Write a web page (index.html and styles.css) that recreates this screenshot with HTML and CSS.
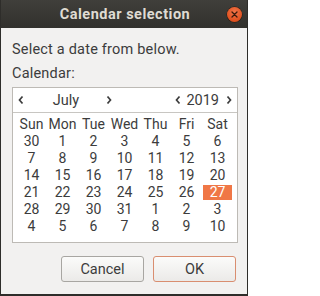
FILE: index.html
```html
<!DOCTYPE html>
<html>
<head>
<meta charset="utf-8">
<link rel="stylesheet" href="styles.css">
</head>
<body>
<div class="window">
  <div class="titlebar">
    <span class="title">Calendar selection</span>
    <span class="close"><svg width="15" height="15" viewBox="0 0 15 15"><path d="M5 5 L10 10 M10 5 L5 10" stroke="#3a1a0c" stroke-width="1.3" stroke-linecap="round"/></svg></span>
  </div>
  <div class="content">
    <div class="label">Select a date from below.</div>
    <div class="label">Calendar:</div>
    <div class="calendar">
      <div class="cal-header">
        <div class="nav month-nav">
          <svg class="chev" width="6" height="10" viewBox="0 0 6 10"><path d="M4.5 1.5 L1.5 5 L4.5 8.5" fill="none" stroke="#3c3c3c" stroke-width="1.7"/></svg>
          <span class="month">July</span>
          <svg class="chev" width="6" height="10" viewBox="0 0 6 10"><path d="M1.5 1.5 L4.5 5 L1.5 8.5" fill="none" stroke="#3c3c3c" stroke-width="1.7"/></svg>
        </div>
        <div class="nav year-nav">
          <svg class="chev" width="6" height="10" viewBox="0 0 6 10"><path d="M4.5 1.5 L1.5 5 L4.5 8.5" fill="none" stroke="#3c3c3c" stroke-width="1.7"/></svg>
          <span class="year">2019</span>
          <svg class="chev" width="6" height="10" viewBox="0 0 6 10"><path d="M1.5 1.5 L4.5 5 L1.5 8.5" fill="none" stroke="#3c3c3c" stroke-width="1.7"/></svg>
        </div>
      </div>
      <div class="grid">
        <span>Sun</span><span>Mon</span><span>Tue</span><span>Wed</span><span>Thu</span><span>Fri</span><span>Sat</span>
        <span>30</span><span>1</span><span>2</span><span>3</span><span>4</span><span>5</span><span>6</span>
        <span>7</span><span>8</span><span>9</span><span>10</span><span>11</span><span>12</span><span>13</span>
        <span>14</span><span>15</span><span>16</span><span>17</span><span>18</span><span>19</span><span>20</span>
        <span>21</span><span>22</span><span>23</span><span>24</span><span>25</span><span>26</span><span class="sel">27</span>
        <span>28</span><span>29</span><span>30</span><span>31</span><span>1</span><span>2</span><span>3</span>
        <span>4</span><span>5</span><span>6</span><span>7</span><span>8</span><span>9</span><span>10</span>
      </div>
    </div>
    <div class="buttons">
      <button class="btn">Cancel</button>
      <button class="btn ok">OK</button>
    </div>
  </div>
</div>
</body>
</html>
```
FILE: styles.css
```css
html, body {
  margin: 0;
  padding: 0;
}
body {
  width: 248px;
  height: 296px;
  overflow: hidden;
  font-family: Roboto, "Open Sans", sans-serif;
  color: #3c3c3c;
}
.window {
  box-sizing: border-box;
  width: 248px;
  height: 296px;
  background: #f2f1f0;
  border-left: 1px solid #2e2d2a;
  border-right: 1px solid #2e2d2a;
  border-bottom: 2px solid #2e2d2a;
  display: flex;
  flex-direction: column;
}
.titlebar {
  height: 28px;
  flex: none;
  background: linear-gradient(#403f3b, #32312d);
  display: grid;
  grid-template-columns: 1fr auto 1fr;
  align-items: center;
}
.title {
  grid-column: 2;
  color: #dfdbd2;
  font-weight: bold;
  font-size: 14.5px;
  letter-spacing: 0.5px;
  padding-left: 2px;
}
.close {
  grid-column: 3;
  justify-self: end;
  margin-right: 5px;
  width: 15px;
  height: 15px;
  border-radius: 50%;
  background: radial-gradient(circle at 50% 35%, #f2764a, #e0501e 70%, #c8461a);
  box-shadow: 0 0 0 0.5px #2a1a10;
  display: flex;
}
.content {
  flex: 1;
  padding: 10px 9px 0 11px;
  display: flex;
  flex-direction: column;
}
.label {
  font-size: 14.5px;
  line-height: 24px;
  letter-spacing: 0.2px;
}
.calendar {
  margin-top: 1px;
  background: #fff;
  border: 1px solid #bdbab5;
  height: 156px;
  box-sizing: border-box;
  flex: none;
}
.cal-header {
  height: 24px;
  border-bottom: 1px solid #c8c6c2;
  display: flex;
  justify-content: space-between;
  align-items: center;
  font-size: 14.5px;
}
.nav {
  display: flex;
  align-items: center;
}
.month-nav {
  margin-left: 5px;
}
.month {
  width: 80px;
  margin-left: 2px;
  text-align: center;
}
.year-nav {
  margin-right: 5px;
}
.year {
  margin: 0 7px 0 5px;
}
.grid {
  display: grid;
  grid-template-columns: repeat(7, 31px);
  grid-auto-rows: 17px;
  padding: 3px 0 0 3px;
  font-size: 14px;
  line-height: 15px;
}
.grid span {
  display: flex;
  align-items: center;
  justify-content: center;
  margin: 1px;
  height: 15px;
}
.grid .sel {
  background: #f07746;
  color: #fff;
}
.buttons {
  margin-top: auto;
  margin-bottom: 12px;
  display: flex;
  justify-content: flex-end;
  gap: 9px;
  padding-right: 2px;
}
.btn {
  width: 83px;
  height: 26px;
  font-family: Roboto, "Open Sans", sans-serif;
  font-size: 14.5px;
  color: #3c3c3c;
  border: 1px solid #a8a6a2;
  border-radius: 3px;
  background: linear-gradient(#fbfbfa, #ebeae8);
  padding: 0;
}
.btn.ok {
  border-color: #d98e70;
}
```
